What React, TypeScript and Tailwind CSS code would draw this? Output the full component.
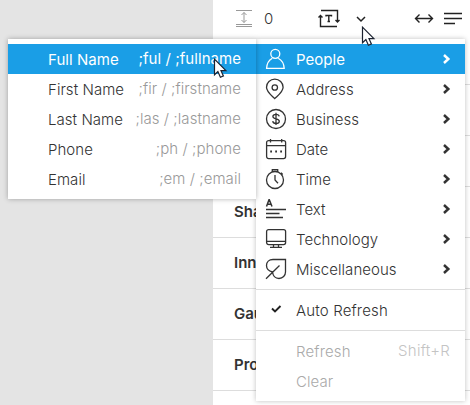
import React from "react";

type MenuRow = { label: string; icon: React.ReactNode };

const icons = {
  people: (
    <>
      <circle cx="10.3" cy="5.8" r="4.5" />
      <path d="M7.3 10.2C4 12 1.8 15.5 1.6 20.4H19.2C19 15.5 16.6 12 13.3 10.2" />
    </>
  ),
  address: (
    <>
      <path d="M9.7 20.6C5.5 16.5 1.5 13.6 1.5 9.2a8.2 8 0 0 1 16.6 0C18.1 13.6 14 16.5 9.7 20.6Z" />
      <circle cx="9.8" cy="9.5" r="2.7" />
    </>
  ),
  business: (
    <>
      <circle cx="11" cy="11" r="9.5" />
      <path d="M14.2 8.4C14 7 12.7 6.4 11 6.4S7.9 7.2 7.9 8.6C7.9 11.7 14.3 10.2 14.3 13.3C14.3 14.7 12.9 15.5 11 15.5S7.9 14.7 7.7 13.2M11 4.8V17" />
    </>
  ),
  date: (
    <>
      <rect x="1.6" y="2.6" width="19" height="18" rx="2" />
      <path d="M1.6 7.6H20.6M5.5 1V4.5M16.7 1V4.5" />
      <path d="M5.2 13.5h1.8M10.2 13.5h1.8M15.2 13.5h1.8" strokeWidth="1.8" />
    </>
  ),
  time: (
    <>
      <circle cx="10" cy="12" r="8.5" />
      <path d="M7.3 1.6H12.7V3.4H7.3ZM10 7V12L13 15.2M16 4.8L17.7 6.5" />
    </>
  ),
  text: (
    <>
      <path d="M1.5 8.5L4 1.8H4.3L7 8.500M2.400 6.300H6" strokeWidth="1.5" />
      <path d="M1 11.5H21M1 15.5H14.500M1 19.500H18" />
    </>
  ),
  technology: (
    <>
      <rect x="1.6" y="1.6" width="19" height="15" rx="2" />
      <path d="M1.6 13.4H20.6M8.5 16.6V19M13.5 16.6V19M5 19.4H17" />
    </>
  ),
  misc: (
    <path d="M20.5 1.5H8C4 1.5 1.5 4.2 1.5 7.5C1.5 10.6 3.800 13 7.500 14C8 17.500 10 20.500 14 20.500C17.800 20.500 20.500 17.500 20.500 14ZM1 20.800L14.500 7.500" />
  ),
};

const rows: MenuRow[] = [
  { label: "People", icon: icons.people },
  { label: "Address", icon: icons.address },
  { label: "Business", icon: icons.business },
  { label: "Date", icon: icons.date },
  { label: "Time", icon: icons.time },
  { label: "Text", icon: icons.text },
  { label: "Technology", icon: icons.technology },
  { label: "Miscellaneous", icon: icons.misc },
];

const names = [
  ["Full Name", ";ful / ;fullname"],
  ["First Name", ";fir / ;firstname"],
  ["Last Name", ";las / ;lastname"],
  ["Phone", ";ph / ;phone"],
  ["Email", ";em / ;email"],
];

const sections = ["", "", "", "Shadow", "Inner", "Gaussian", "Prototype"];

function Cursor() {
  return (
    <svg width="15" height="21" viewBox="0 0 15 21" fill="#fff" stroke="#1b2230" strokeWidth="1.2">
      <path d="M1.500 1.200V16.800L4.900 13.600L7.400 19.200L10.400 17.900L8 12.700H12.900Z" />
    </svg>
  );
}

function Toolbar() {
  return (
    <div className="flex h-[34px] items-center pt-1 text-[#333]">
      <svg className="ml-[22px]" width="20" height="20" fill="none" stroke="#999" strokeWidth="1">
        <path d="M1 1.500H17M1 15.500H17M1 17.500H17M9 3.500V13.500M6.500 6L9 3.500L11.500 6M6.500 11L9 13.500L11.500 11" />
      </svg>
      <span className="ml-[9px] w-[10px] text-[15px] font-light">0</span>
      <svg className="ml-[44px]" width="22" height="20" fill="none" stroke="#222" strokeWidth="1.400">
        <path d="M3 1.500H19.500V13M17.500 11L19.500 13L21.500 11M19 17.500H2.500V6.500M.500 8.500L2.500 6.500L4.500 8.500" />
        <path d="M8 7.500V6.500H13.500V7.500M10.800 6.500V12.500M9.500 12.500H12" />
      </svg>
      <svg className="ml-[16px]" width="10" height="8" fill="none" stroke="#222" strokeWidth="1.500">
        <path d="M1 2L5 6L9 2" />
      </svg>
      <svg className="ml-[48px]" width="20" height="12" fill="none" stroke="#222" strokeWidth="1.400">
        <path d="M1.500 5.500H18.500M5.500 1.500L1.500 5.500L5.500 9.500M14.500 1.500L18.500 5.500L14.500 9.500" />
      </svg>
      <svg className="ml-[10px]" width="18" height="14" fill="none" stroke="#222" strokeWidth="1.500">
        <path d="M0 1.500H18M0 6.500H18M0 11.500H11" />
      </svg>
    </div>
  );
}

export default function App() {
  return (
    <div className="relative flex h-[405px] w-[470px] overflow-hidden bg-[#e4e4e4] font-['Inter',sans-serif] text-[15px] text-[#333]">
      <div className="ml-[213px] w-[257px] bg-white">
        <Toolbar />
        {sections.map((s, i) => (
          <div key={i} className="flex h-[51px] items-center border-b border-[#ddd] pl-[21px] font-semibold">
            {s}
          </div>
        ))}
      </div>

      <div className="absolute left-[256px] top-[39px] h-[362px] w-[209px] bg-white pt-[5px] font-light tracking-[0.04px] shadow-[0_0_5px_rgba(0,0,0,0.25)]">
        {rows.map((r, i) => (
          <div
            key={r.label}
            className={`flex h-[30px] items-center pl-[9px] pr-[14px] ${i === 0 ? "bg-[#1a9ee6] font-normal text-white" : ""}`}
          >
            <svg width="22" height="22" fill="none" stroke="currentColor" strokeWidth="1.300">
              {r.icon}
            </svg>
            <span className="ml-[9px] grow pt-[2px]">{r.label}</span>
            <svg width="9" height="12" fill="none" stroke="currentColor" strokeWidth="2.500">
              <path d="M2 2L6.300 6L2 10" />
            </svg>
          </div>
        ))}
        <div className="mt-[5px] flex h-[41px] items-center border-t border-[#ddd]">
          <svg className="ml-[15px] mb-[3px]" width="11" height="10" fill="none" stroke="#222" strokeWidth="1.900">
            <path d="M1 4.500L4 7.500L9.500 2" />
          </svg>
          <span className="ml-[14px] pt-[2px] tracking-[0.16px]">Auto Refresh</span>
        </div>
        <div className="border-t border-[#ddd] pt-[6px] text-[#aaa]">
          <div className="flex h-[30px] items-center justify-between pl-[40px] pr-[15px]">
            <span className="tracking-[0.16px]">Refresh</span>
            <span className="pb-[2px] tracking-[0.25px] text-[#c4c4c4]">Shift+R</span>
          </div>
          <div className="flex h-[30px] items-center pl-[40px]">Clear</div>
        </div>
      </div>

      <div className="absolute left-[8px] top-[39px] h-[160px] w-[248px] bg-white pt-[5px] font-light tracking-[0.05px] shadow-[0_0_5px_rgba(0,0,0,0.3)]">
        {names.map(([name, code], i) => (
          <div
            key={name}
            className={`flex h-[30px] items-center justify-between pl-[40px] pr-[15px] ${i === 0 ? "bg-[#1a9ee6] font-normal text-white" : ""}`}
          >
            <span className="pt-[2px]">{name}</span>
            <span className={i === 0 ? "text-white" : "text-[#999]"}>{code}</span>
          </div>
        ))}
      </div>

      <div className="absolute left-[361px] top-[26px]"><Cursor /></div>
      <div className="absolute left-[213px] top-[58px]"><Cursor /></div>
    </div>
  );
}
